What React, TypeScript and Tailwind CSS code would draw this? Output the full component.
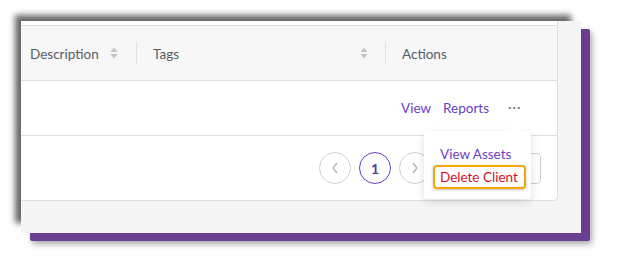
import React from "react";

function SortIcon() {
  return (
    <svg width="8" height="12" viewBox="0 0 8 12" className="shrink-0">
      <path d="M4 0.5 L7.5 5 L0.5 5 Z" fill="#c4c4c4" />
      <path d="M4 11.5 L7.5 7 L0.5 7 Z" fill="#c4c4c4" />
    </svg>
  );
}

function Divider() {
  return <div className="h-[22px] w-px bg-[#e3e3e3]" />;
}

export default function App() {
  return (
    <div className="w-[623px] h-[276px] bg-white overflow-hidden" style={{ fontFamily: "Lato, 'Liberation Sans', sans-serif" }}>
      <div className="ml-[21px] mt-[21px] w-[560px] h-[212px] relative shadow-[-8px_-8px_6px_-2px_rgba(0,0,0,0.6),9px_8px_0_0_#6b3f8f,11px_11px_6px_0_rgba(0,0,0,0.35)] rounded-[2px]">
        <div className="w-full h-full bg-[#f5f5f5] overflow-hidden">
          <div className="w-[537px] h-[180px] bg-white border-r border-b border-[#dedede] rounded-br-[4px] flex flex-col">
            <div className="h-[5px] border-b border-[#dedede]" />
            <div className="h-[55px] bg-[#f7f7f7] border-b border-[#dedede] flex items-center text-[13.5px] text-[#555c66]">
              <div className="w-[115px] pl-[9px] pr-[18px] flex items-center justify-between">
                <span className="pt-[3px]">Description</span>
                <SortIcon />
              </div>
              <Divider />
              <div className="w-[248px] pl-[16px] pr-[17px] flex items-center justify-between">
                <span className="pt-[3px]">Tags</span>
                <SortIcon />
              </div>
              <Divider />
              <div className="pl-[16px] pt-[3px]">Actions</div>
            </div>
            <div className="h-[55px] border-b border-[#dedede] flex items-center text-[13.5px] text-[#6a3fc8]">
              <div className="ml-[380px] flex items-center">
                <span>View</span>
                <span className="ml-[12px]">Reports</span>
                <span className="ml-[19px] text-[#6b6b6b] tracking-[1px] -mt-[2px]">···</span>
              </div>
            </div>
            <div className="flex-1 flex items-center justify-end pr-[16px] gap-[8px]">
              <div className="w-[32px] h-[32px] rounded-full border border-[#d0d0d0] flex items-center justify-center">
                <svg width="8" height="12" viewBox="0 0 8 12"><path d="M6 1 L2 6 L6 11" fill="none" stroke="#b5b5b5" strokeWidth="1.3" /></svg>
              </div>
              <div className="w-[32px] h-[32px] rounded-full border border-[#6a3fc8] flex items-center justify-center text-[14px] font-bold text-[#4a3f9a]">1</div>
              <div className="w-[32px] h-[32px] rounded-full border border-[#d0d0d0] flex items-center justify-center">
                <svg width="8" height="12" viewBox="0 0 8 12"><path d="M2 1 L6 6 L2 11" fill="none" stroke="#b5b5b5" strokeWidth="1.3" /></svg>
              </div>
              <div className="ml-[8px] w-[94px] h-[31px] rounded-[4px] border border-[#cfcfcf] bg-white" />
            </div>
          </div>
        </div>

        <div className="absolute left-[403px] top-[110px] w-[107px] h-[68px] bg-white rounded-[4px] shadow-[0_3px_10px_rgba(0,0,0,0.13)] text-[13.5px] whitespace-nowrap">
          <div className="absolute left-[86px] -top-[5px] w-0 h-0 border-l-[5px] border-r-[5px] border-b-[5px] border-l-transparent border-r-transparent border-b-white" />
          <div className="pl-[16px] pt-[13px] leading-[20px] text-[#6a3fc8]">View Assets</div>
          <div className="ml-[9px] mr-[5px] mt-[1px] h-[24px] border-2 border-[#f5a70a] rounded-[4px] shadow-[0_1px_3px_rgba(0,0,0,0.25)] flex items-center pl-[5px] text-[#d4101e]">
            Delete Client
          </div>
        </div>
      </div>
    </div>
  );
}
